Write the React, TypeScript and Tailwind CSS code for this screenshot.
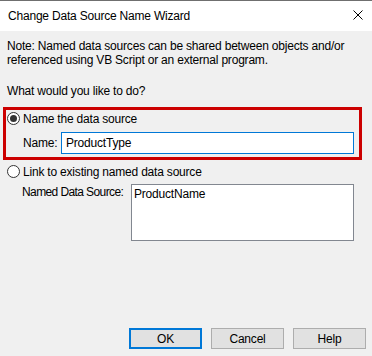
import React, { useState } from "react";

const font = { fontFamily: '"Liberation Sans", Arial, sans-serif' };

const Radio = ({ checked, onClick }: { checked: boolean; onClick: () => void }) => (
  <button
    onClick={onClick}
    className="w-[13px] h-[13px] rounded-full border border-[#333333] bg-white flex items-center justify-center shrink-0"
  >
    {checked && <span className="w-[7px] h-[7px] rounded-full bg-[#333333]" />}
  </button>
);

const DialogButton = ({ label, primary }: { label: string; primary?: boolean }) => (
  <button
    className={
      "w-[73px] h-[21px] bg-[#e1e1e1] text-[12px] leading-none text-black flex items-center justify-center " +
      (primary ? "border-2 border-[#0078d7]" : "border border-[#adadad]")
    }
  >
    {label}
  </button>
);

export default function App() {
  const [mode, setMode] = useState<"name" | "link">("name");
  const [name, setName] = useState("ProductType");

  return (
    <div
      style={font}
      className="w-[372px] h-[356px] bg-[#f0f0f0] text-[12px] tracking-[-0.2px] text-black flex flex-col overflow-hidden"
    >
      {/* Title bar */}
      <div className="h-[31px] bg-white border-t border-[#6f6f6f] flex items-center justify-between pl-[8px] pr-[6px] shrink-0">
        <span className="leading-none">Change Data Source Name Wizard</span>
        <svg width="10" height="10" viewBox="0 0 10 10" className="mr-[3px] mb-[3px]">
          <path d="M0.5 0.5 L9.5 9.5 M9.5 0.5 L0.5 9.5" stroke="#000" strokeWidth="1" />
        </svg>
      </div>

      {/* Body */}
      <div className="flex flex-col flex-1 px-[3px]">
        <p className="mt-[8px] px-[4px] leading-[14px] whitespace-nowrap">
          Note: Named data sources can be shared between objects and/or
          <br />
          referenced using VB Script or an external program.
        </p>
        <p className="mt-[17px] px-[4px] leading-[14px]">What would you like to do?</p>

        {/* Highlighted option */}
        <div className="mt-[9px] w-[359px] border-[3px] border-[#cc0000] flex flex-col pt-[2px] pb-[3px]">
          <label className="flex items-center gap-[3px] pl-[1px] h-[13px]">
            <Radio checked={mode === "name"} onClick={() => setMode("name")} />
            <span className="leading-none">Name the data source</span>
          </label>
          <div className="flex items-center mt-[7px] pl-[17px]">
            <span className="w-[38px]">Name:</span>
            <input
              value={name}
              onChange={(e) => setName(e.target.value)}
              className="w-[293px] h-[22px] border border-[#0078d7] bg-white px-[4px] outline-none text-[12px] tracking-[-0.2px]"
              style={font}
            />
          </div>
        </div>

        <label className="flex items-center gap-[3px] pl-[4px] mt-[5px] h-[13px]">
          <Radio checked={mode === "link"} onClick={() => setMode("link")} />
          <span className="leading-none">Link to existing named data source</span>
        </label>

        <div className="flex items-start mt-[6px] pl-[19px]">
          <span className="w-[109px] mt-[2px] leading-none whitespace-nowrap tracking-[-0.6px]">
            Named Data Source:
          </span>
          <div className="w-[223px] h-[57px] border border-[#828790] bg-white px-[2px] py-[2px] leading-[14px]">
            ProductName
          </div>
        </div>

        <div className="mt-auto mb-[7px] flex justify-end gap-[9px] pr-[3px]">
          <DialogButton label="OK" primary />
          <DialogButton label="Cancel" />
          <DialogButton label="Help" />
        </div>
      </div>
    </div>
  );
}
